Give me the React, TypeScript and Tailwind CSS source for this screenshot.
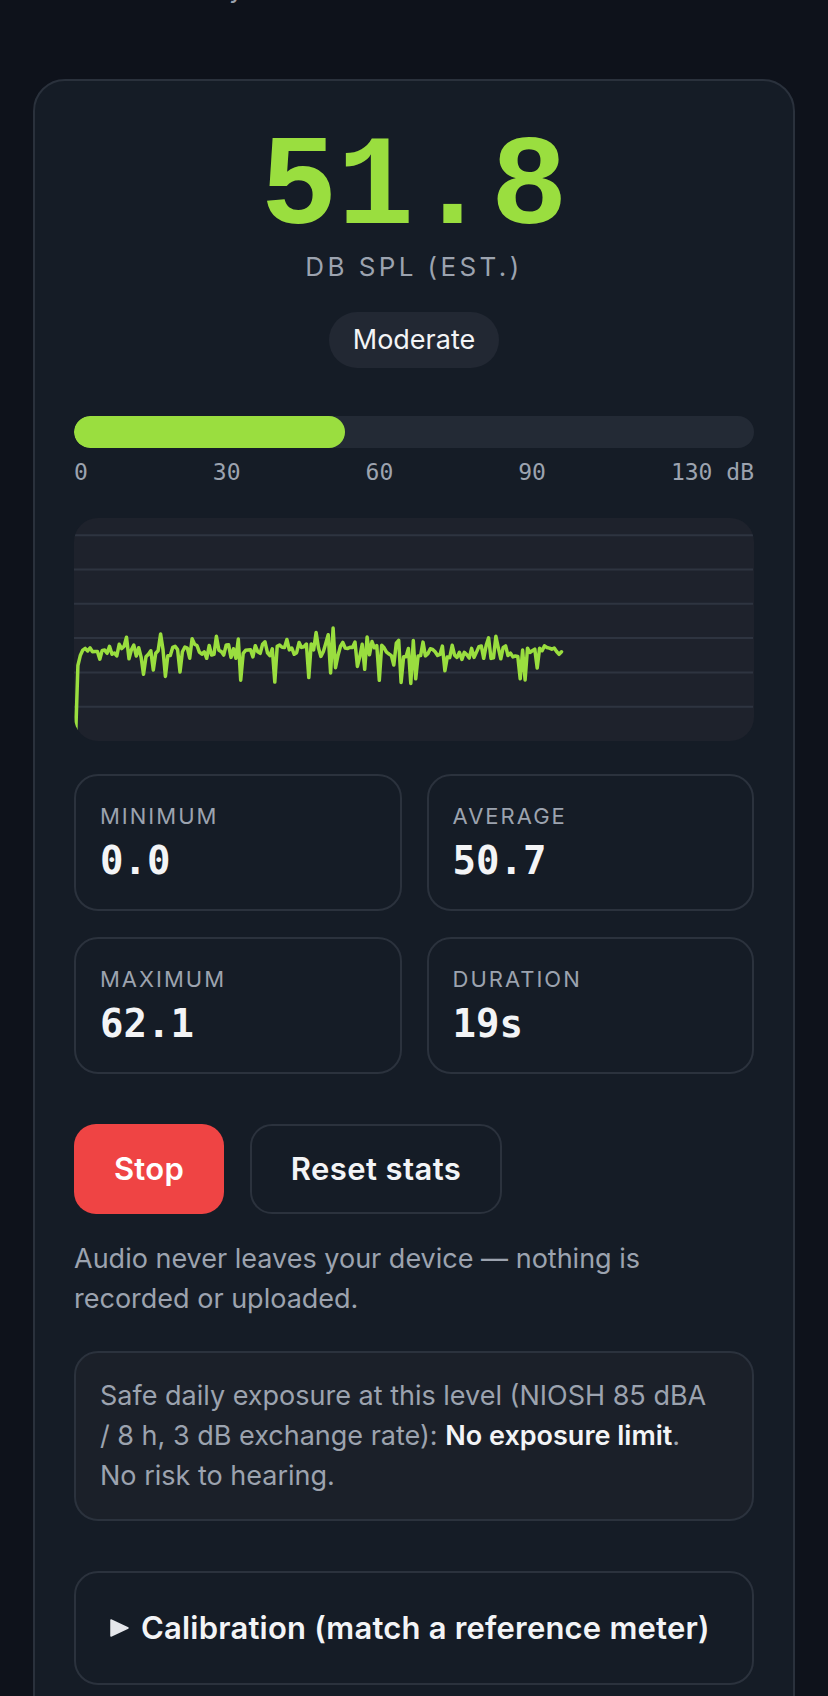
import React from "react";

const LIME = "#9ade3f";
const MAX_DB = 130;
const CURRENT = 51.8;

// Chart geometry
const CHART_W = 679;
const CHART_H = 223;
const STEP = 2.43;

function rand(i: number) {
  const x = Math.sin(i * 12.9898 + 78.233) * 43758.5453;
  return x - Math.floor(x);
}

function buildSamples(): number[] {
  const out: number[] = [0, 44, 50, 53, 54, 52.5];
  for (let i = 6; i <= 200; i++) {
    let base = 52;
    if (i > 70 && i < 150) base = 53.5;
    if (i >= 150) base = 51.5;
    const r = rand(i);
    const r2 = rand(i + 500);
    let v = base + (r - 0.5) * 9;
    if (r2 < 0.1) v = base - 9 - rand(i + 900) * 12;
    else if (r2 > 0.93) v = base + 5 + rand(i + 1300) * 8;
    out.push(v);
  }
  out[out.length - 1] = 52;
  return out;
}

const samples = buildSamples();

function yFor(db: number) {
  return (1 - db / MAX_DB) * CHART_H;
}

function LevelChart() {
  const points = samples
    .map((v, i) => `${(i * STEP + 1.5).toFixed(1)},${yFor(v).toFixed(1)}`)
    .join(" ");
  const grid = [120, 100, 80, 60, 40, 20];

  return (
    <div className="mt-[30px] h-[223px] overflow-hidden rounded-[24px] bg-[#1e222c]">
      <svg width={CHART_W} height={CHART_H} viewBox={`0 0 ${CHART_W} ${CHART_H}`}>
        {grid.map((g) => (
          <line
            key={g}
            x1={0}
            x2={CHART_W}
            y1={yFor(g)}
            y2={yFor(g)}
            stroke="#2e3440"
            strokeWidth={2}
          />
        ))}
        <polyline
          points={points}
          fill="none"
          stroke={LIME}
          strokeWidth={3.5}
          strokeLinejoin="round"
          strokeLinecap="round"
        />
      </svg>
    </div>
  );
}

function Stat({ label, value }: { label: string; value: string }) {
  return (
    <div className="h-[137px] rounded-[24px] border-2 border-[#2b323d] px-[24px] pt-[24px]">
      <div className="text-[22px] leading-[32px] tracking-[2px] text-[#9ca3af]">
        {label}
      </div>
      <div className="mt-[5px] font-['DejaVu_Sans_Mono',monospace] text-[39px] font-bold leading-[48px] text-[#f3f4f6]">
        {value}
      </div>
    </div>
  );
}

export default function App() {
  return (
    <div className="min-h-screen overflow-hidden bg-[#0e121b] font-['Inter',sans-serif]">
      <p className="-mt-[31px] pl-[33px] text-[26px] leading-[40px] text-[#9ca3af]">
        Check how noisy it is around here.
      </p>

      <div className="mx-[33px] mt-[70px] rounded-[32px] border-2 border-[#2a313c] bg-[#151c26] px-[39px] pb-[60px] pt-[46px]">
        {/* Reading */}
        <div className="text-center font-['Liberation_Mono',monospace] text-[128px] font-bold leading-[124px] text-[#9ade3f]">
          51.8
        </div>
        <div className="text-center text-[26px] leading-[32px] tracking-[3.4px] text-[#9ca3af]">
          DB SPL (EST.)
        </div>
        <div className="mt-[29px] flex justify-center">
          <span className="flex h-[56px] items-center rounded-full bg-[#222833] px-6 text-[27px] font-normal text-[#f3f4f6]">
            Moderate
          </span>
        </div>

        {/* Level bar */}
        <div className="mt-[48px] h-[32px] overflow-hidden rounded-full bg-[#232a35]">
          <div
            className="h-full rounded-full bg-[#9ade3f]"
            style={{ width: `${(CURRENT / MAX_DB) * 100}%` }}
          />
        </div>
        <div className="mt-2 flex justify-between font-['DejaVu_Sans_Mono',monospace] text-[23px] leading-[32px] text-[#9ca3af]">
          <span>0</span>
          <span>30</span>
          <span>60</span>
          <span>90</span>
          <span>130 dB</span>
        </div>

        <LevelChart />

        {/* Stats */}
        <div className="mt-[33px] grid grid-cols-2 gap-x-[25px] gap-y-[26px]">
          <Stat label="MINIMUM" value="0.0" />
          <Stat label="AVERAGE" value="50.7" />
          <Stat label="MAXIMUM" value="62.1" />
          <Stat label="DURATION" value="19s" />
        </div>

        {/* Controls */}
        <div className="mt-[50px] flex gap-[26px]">
          <button className="h-[90px] w-[150px] rounded-[22px] bg-[#ef4444] text-[31px] font-semibold tracking-[0.3px] text-white">
            Stop
          </button>
          <button className="h-[90px] w-[252px] rounded-[22px] border-2 border-[#2b323d] text-[31px] font-semibold tracking-[0.4px] text-[#f3f4f6]">
            Reset stats
          </button>
        </div>
        <p className="mt-[25px] text-[27px] leading-[40px] text-[#9ca3af]">
          Audio never leaves your device — nothing is
          <br />
          recorded or uploaded.
        </p>

        {/* Exposure */}
        <div className="mt-[32px] rounded-[24px] border-2 border-[#2b323d] bg-[#1b2029] px-[24px] py-[23px] text-[27px] leading-[40px] text-[#9ca3af]">
          Safe daily exposure at this level (NIOSH 85 dBA
          <br />/ 8 h, 3 dB exchange rate):{" "}
          <strong className="font-semibold text-[#f3f4f6]">No exposure limit</strong>.
          <br />
          No risk to hearing.
        </div>

        {/* Calibration */}
        <div className="mt-[50px] flex h-[114px] items-center gap-[12px] rounded-[24px] border-2 border-[#2b323d] px-[34px]">
          <svg width="19" height="18" viewBox="0 0 19 18" className="shrink-0">
            <path d="M1 1 L18 9 L1 17 Z" fill="#e5e7eb" stroke="#e5e7eb" strokeWidth={1.5} strokeLinejoin="round" />
          </svg>
          <span className="whitespace-nowrap text-[31px] font-semibold tracking-[0.2px] text-[#f3f4f6]">
            Calibration (match a reference meter)
          </span>
        </div>
      </div>
    </div>
  );
}
